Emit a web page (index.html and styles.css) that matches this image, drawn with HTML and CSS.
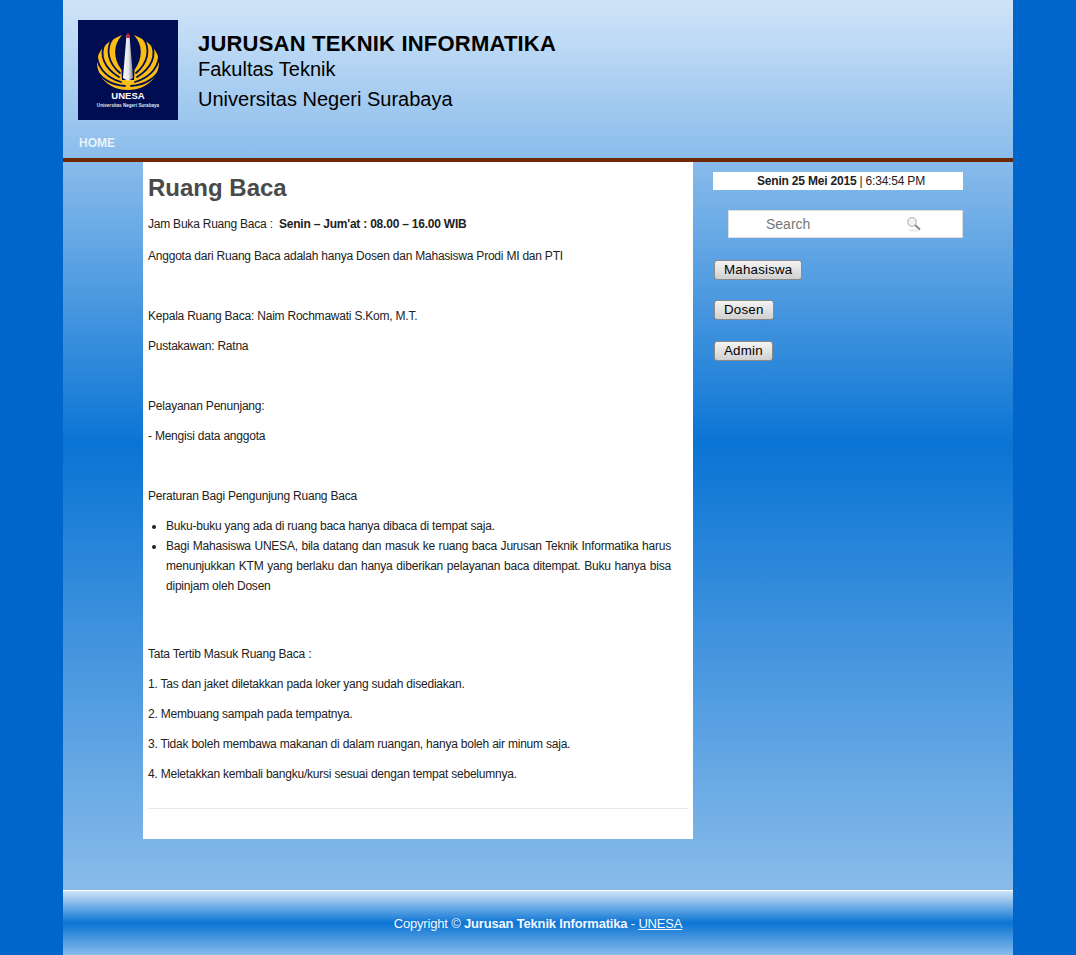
FILE: index.html
```html
<!DOCTYPE html>
<html lang="en">
<head>
<meta charset="UTF-8" />
<title>Ruang Baca</title>
<link rel="stylesheet" href="styles.css">
</head>
<body>
  <div class="page">
    <div class="main">
      <header class="header">
        <div class="brand">
          <svg class="logo" width="100" height="100" viewBox="0 0 100 100">
            <defs>
              <linearGradient id="tugu" x1="0" x2="1" y1="0" y2="0">
                <stop offset="0" stop-color="#ffffff" />
                <stop offset="0.55" stop-color="#e4e4ea" />
                <stop offset="1" stop-color="#7d8090" />
              </linearGradient>
              <g id="wing">
                <path fill="#fbbc15" d="M50 70 C32 70 19 58 19 42 C19 31 29 21 44 15 C35 25 35 38 43.500 50 L44 60 L50 60 Z" />
                <g fill="none" stroke="#000d50" stroke-width="1.800" stroke-linecap="round">
                  <path d="M35 18 C27 29 30 43 42 53" />
                  <path d="M27 23 C21 35 26 48 41 57" />
                  <path d="M19 32 C18 45 26 57 43 62" />
                  <path d="M17 47 C22 59 34 65 47 66" />
                </g>
              </g>
            </defs>
            <rect width="100" height="100" fill="#000d50" />
            <use href="#wing" />
            <use href="#wing" transform="translate(100 0) scale(-1 1)" />
            <path fill="url(#tugu)" d="M48.500 15 L51.500 15 L55 58 L50 61 L45 58 Z" />
            <path fill="#c8202c" d="M50 12.500 L51.500 15 L51.700 18 L48.300 18 L48.500 15 Z" />
            <text class="logo-name" x="50" y="79" text-anchor="middle">UNESA</text>
            <text class="logo-sub" x="50" y="86.500" text-anchor="middle">Universitas Negeri Surabaya</text>
          </svg>
          <div class="brand-text">
            <h2>JURUSAN TEKNIK INFORMATIKA</h2>
            <p>Fakultas Teknik</p>
            <p>Universitas Negeri Surabaya</p>
          </div>
        </div>
        <nav class="nav"><a href="#">HOME</a></nav>
      </header>

      <div class="columns">
        <div class="content">
          <h1>Ruang Baca</h1>
          <p class="intro">Jam Buka Ruang Baca : &nbsp;<b>Senin – Jum'at : 08.00 – 16.00 WIB</b></p>
          <p>Anggota dari Ruang Baca adalah hanya Dosen dan Mahasiswa Prodi MI dan PTI</p>
          <p>&nbsp;</p>
          <p>Kepala Ruang Baca: Naim Rochmawati S.Kom, M.T.</p>
          <p>Pustakawan: Ratna</p>
          <p>&nbsp;</p>
          <p>Pelayanan Penunjang:</p>
          <p>- Mengisi data anggota</p>
          <p>&nbsp;</p>
          <p>Peraturan Bagi Pengunjung Ruang Baca</p>
          <ul>
            <li>Buku-buku yang ada di ruang baca hanya dibaca di tempat saja.</li>
            <li>Bagi Mahasiswa UNESA, bila datang dan masuk ke ruang baca Jurusan Teknik Informatika harus menunjukkan KTM yang berlaku dan hanya diberikan pelayanan baca ditempat. Buku hanya bisa dipinjam oleh Dosen</li>
          </ul>
          <p class="gap">&nbsp;</p>
          <p>Tata Tertib Masuk Ruang Baca :</p>
          <p>1. Tas dan jaket diletakkan pada loker yang sudah disediakan.</p>
          <p>2. Membuang sampah pada tempatnya.</p>
          <p>3. Tidak boleh membawa makanan di dalam ruangan, hanya boleh air minum saja.</p>
          <p>4. Meletakkan kembali bangku/kursi sesuai dengan tempat sebelumnya.</p>
          <hr>
        </div>

        <aside class="sidebar">
          <div class="clock"><b>Senin 25 Mei 2015</b> | 6:34:54 PM</div>
          <form class="search">
            <input type="text" placeholder="Search">
            <svg class="search-icon" width="16" height="16" viewBox="0 0 16 16">
              <ellipse cx="8" cy="14.500" rx="6" ry="1" fill="#e6e6e6" />
              <circle cx="6" cy="6" r="4.200" fill="#f4f4f4" stroke="#c4c4c4" stroke-width="1.500" />
              <path d="M9 9 L14 13.500" stroke="#8a8a8a" stroke-width="2" />
            </svg>
          </form>
          <div class="links">
            <button type="button">Mahasiswa</button>
            <button type="button">Dosen</button>
            <button type="button" class="last">Admin</button>
          </div>
        </aside>
      </div>
    </div>

    <footer class="footer">
      Copyright © <b>Jurusan Teknik Informatika</b> - <a href="#">UNESA</a>
    </footer>
  </div>
</body>
</html>
```

FILE: styles.css
```css
/* Reset & base */
* {
  box-sizing: border-box;
}
body {
  margin: 0;
  background: #0066cc;
  font-family: "Liberation Sans", Arial, sans-serif;
  font-size: 12px;
  color: #222;
}

.page {
  width: 950px;
  margin: 0 auto;
}

.main {
  height: 890px;
  background: linear-gradient(#d0e4f8 0, #0a74d4 50%, #88bbea 100%);
}

/* Header */
.header {
  height: 162px;
  padding: 20px 15px 0;
  border-bottom: 4px solid #6e2605;
}

.brand {
  display: flex;
  gap: 20px;
  height: 100px;
}

.logo {
  display: block;
  flex: none;
}

.logo-name {
  fill: #fff;
  font-size: 9.500px;
  font-weight: 700;
}

.logo-sub {
  fill: #dfe3ee;
  font-size: 4.600px;
  font-weight: 700;
}

.brand-text {
  padding-top: 12px;
  color: #000;
}

.brand-text h2 {
  margin: 0 0 -2px;
  font-size: 22px;
  line-height: 24px;
  letter-spacing: 0.2px;
}

.brand-text p {
  margin: 0;
  font-size: 20px;
  line-height: 30px;
}

.nav {
  padding: 14px 0 0 1px;
  line-height: 18px;
}

.nav a {
  color: #e9f3fc;
  font-size: 12px;
  font-weight: 700;
  text-decoration: none;
}

/* Columns */
.columns {
  display: flex;
  gap: 20px;
  padding-left: 80px;
}

.content {
  width: 550px;
  height: 677px;
  padding: 0 5px;
  background: #fff;
}

.content h1 {
  margin: 0 0 12px;
  padding-top: 12px;
  color: #4a4a4a;
  font-size: 24px;
  line-height: 28px;
}

.content p {
  margin: 10px 0;
  line-height: 20px;
  letter-spacing: -0.22px;
}

.content .intro {
  margin-bottom: 12px;
}

.content ul {
  margin: 10px 17px 10px 0;
  padding-left: 18px;
  line-height: 20px;
  letter-spacing: -0.22px;
  text-align: justify;
}

.content .gap {
  height: 28px;
}

.content hr {
  height: 1px;
  margin: 24px 0 0;
  border: none;
  background: #e8e8e8;
}

/* Sidebar */
.sidebar {
  width: 250px;
  padding-top: 10px;
}

.clock {
  height: 18px;
  padding-left: 6px;
  background: #fff;
  line-height: 18px;
  letter-spacing: -0.2px;
  text-align: center;
}

.search {
  position: relative;
  margin: 20px 0 22px 15px;
}

.search input {
  display: block;
  width: 235px;
  height: 28px;
  padding: 0 0 0 37px;
  border: 1px solid #ddd;
  background: #fff;
  font-family: inherit;
  font-size: 14px;
  outline: none;
}

.search input::placeholder {
  color: #777;
}

.search-icon {
  position: absolute;
  top: 6px;
  left: 178px;
}

.links {
  display: flex;
  flex-direction: column;
  align-items: flex-start;
  gap: 20px;
  padding-left: 1px;
}

.links button {
  height: 20px;
  padding: 0 9px 1px;
  border: 1px solid #8a8a8a;
  border-radius: 3px;
  background: linear-gradient(#f4f4f4, #d0d0d0);
  color: #000;
  font-family: inherit;
  font-size: 13.330px;
  letter-spacing: 0.2px;
}

.links .last {
  margin-top: 1px;
}

/* Footer */
.footer {
  height: 65px;
  padding-top: 25px;
  border-top: 1px solid #fff;
  background: linear-gradient(#d0e4f8 0, #0a74d4 50%, #88bbea 100%);
  color: #f2f8fe;
  font-size: 13px;
  line-height: 16px;
  letter-spacing: -0.18px;
  text-align: center;
}

.footer a {
  color: #f2f8fe;
}
```
